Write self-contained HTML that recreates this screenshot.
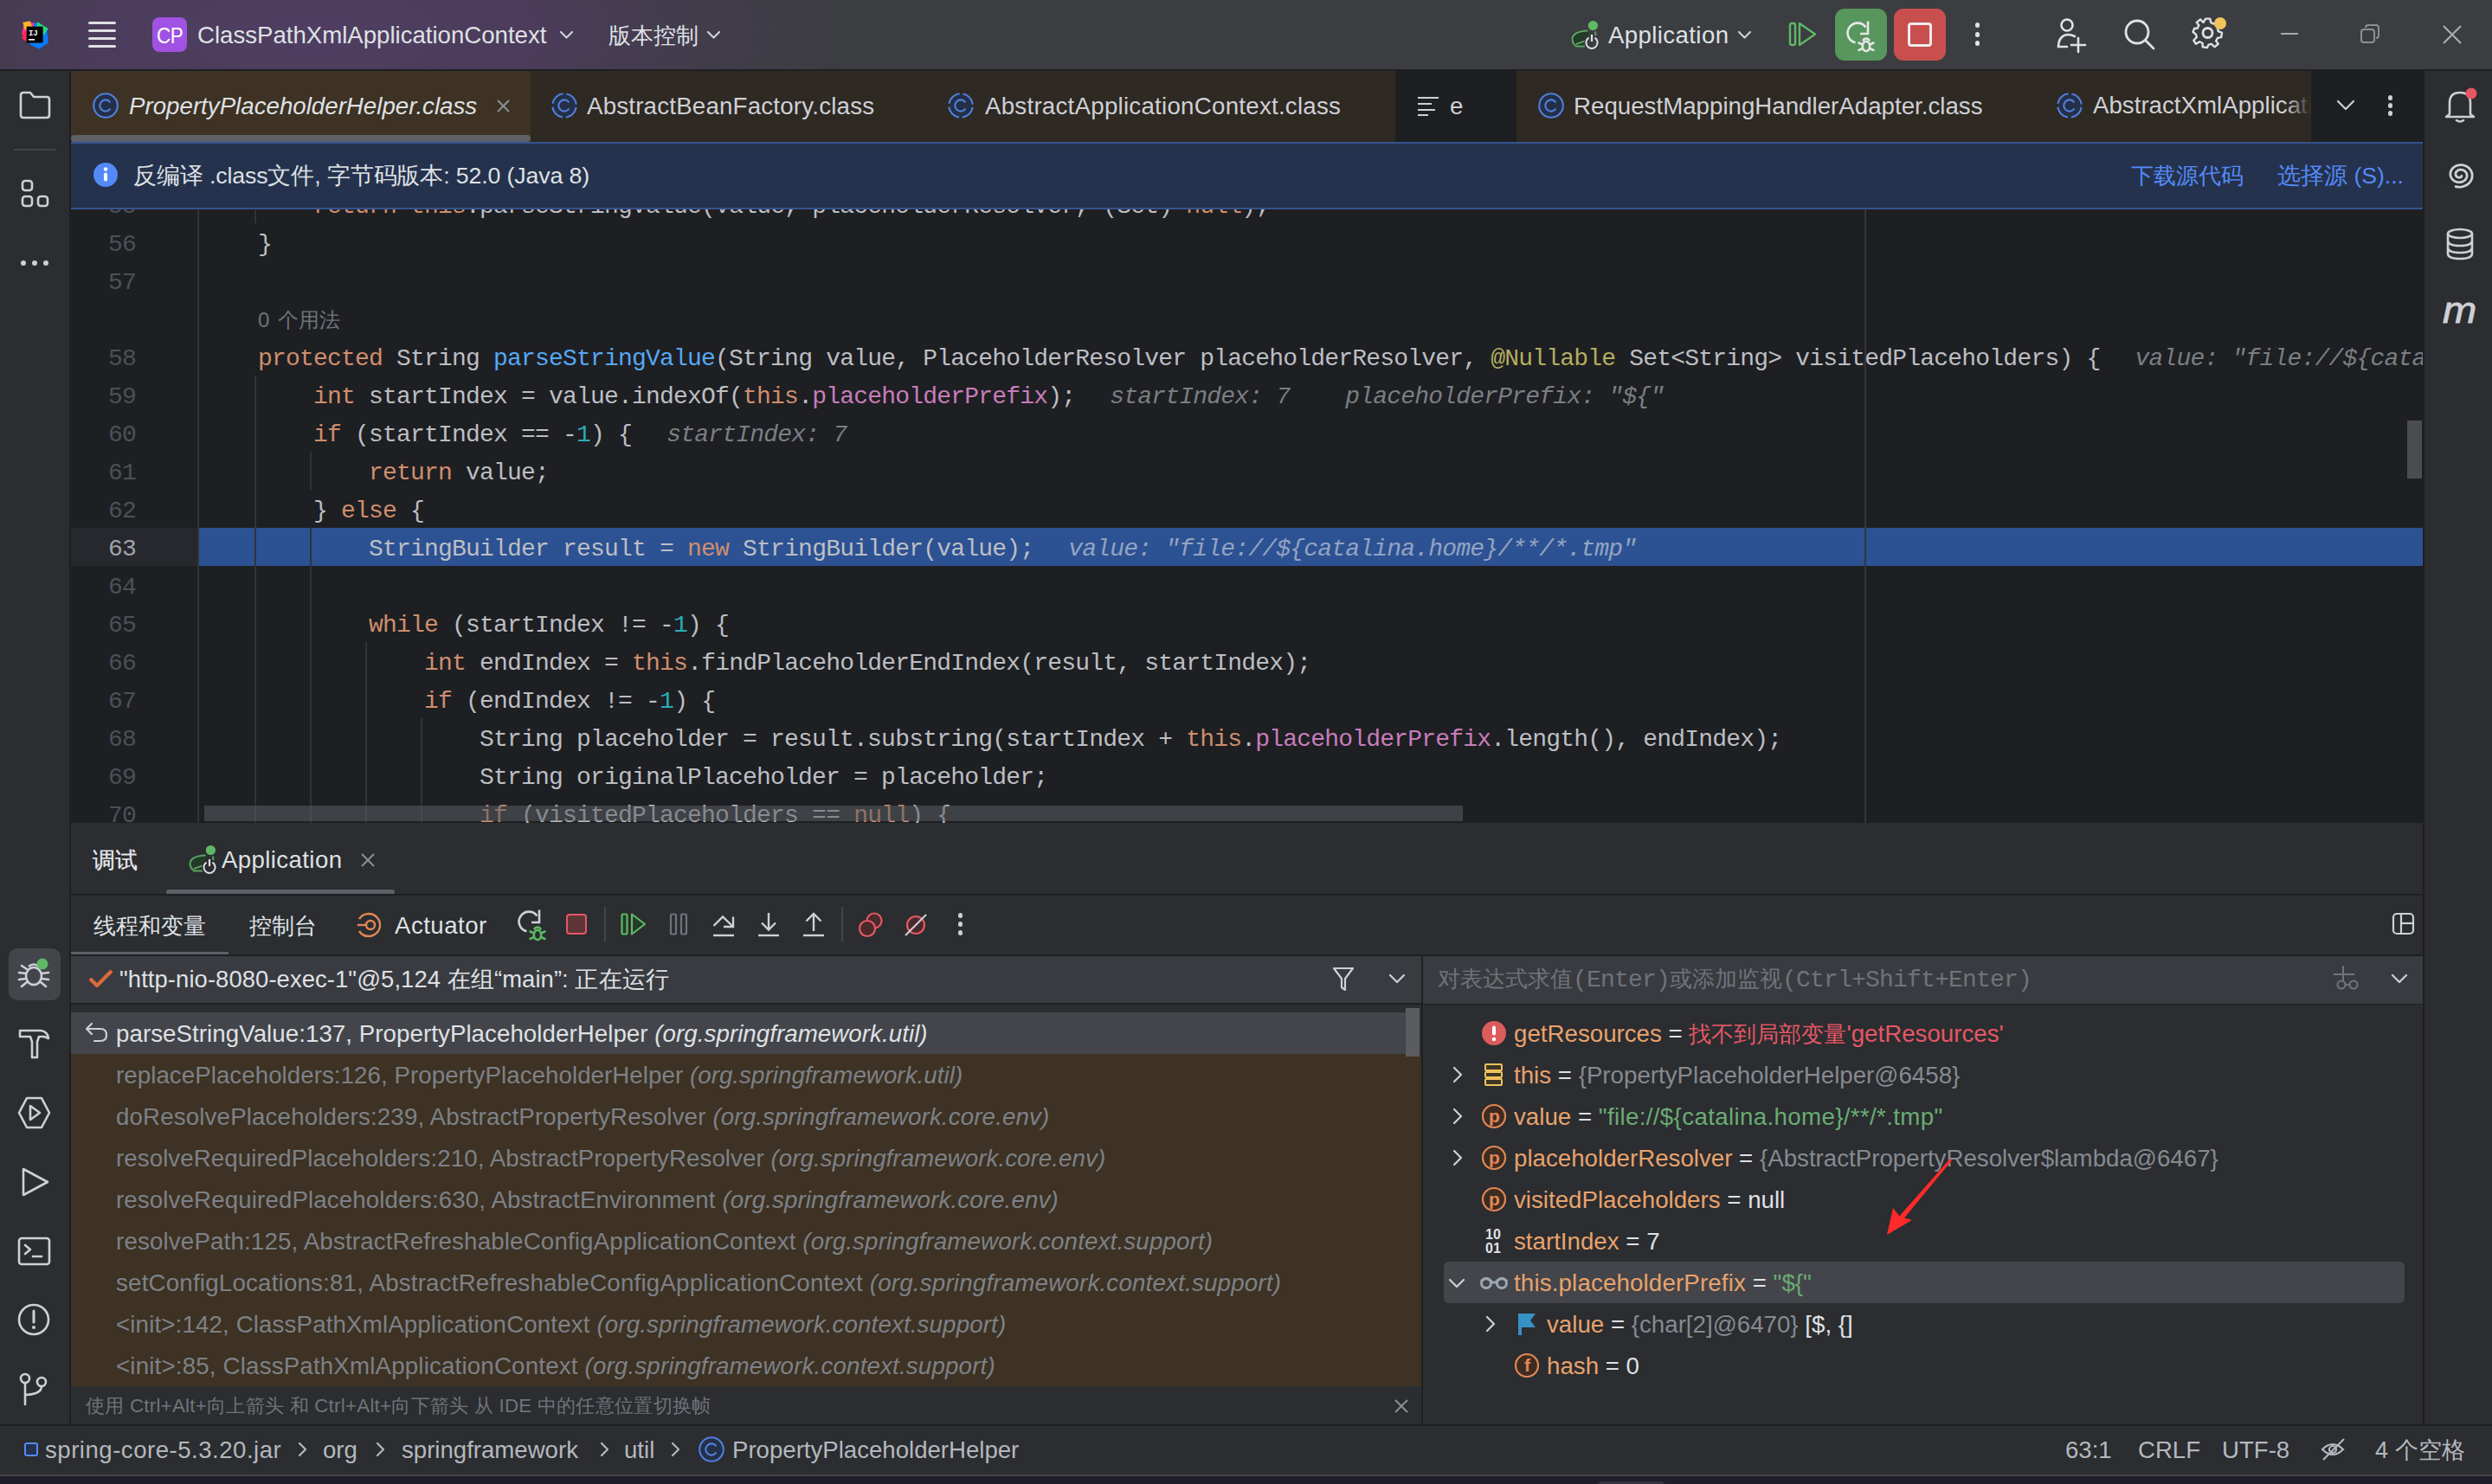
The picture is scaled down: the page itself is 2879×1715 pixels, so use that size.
<!DOCTYPE html><html><head><meta charset="utf-8"><style>
html,body{margin:0;padding:0;width:2879px;height:1715px;overflow:hidden;background:#2b2d30;}
body{position:relative;font-family:"Liberation Sans",sans-serif;}
.code span{white-space:pre}
</style></head><body>
<div style="position:absolute;left:0;top:0;width:2879px;height:80px;background:radial-gradient(ellipse 620px 230px at 360px 40px,#4f3e61 0%,#4b3c5b 40%,#423c4b 72%,#3b3d41 100%);"></div>
<div style="position:absolute;left:0px;top:80px;width:2879px;height:2px;background:#1e1f22;"></div>
<svg style="position:absolute;left:22px;top:21px;" width="38" height="38" viewBox="0 0 38 38"><g transform="translate(1.5,1.5) scale(0.9)">
<polygon points="4,8 14,3 22,8 20,20 6,26 2,18" fill="#ff318c"/>
<polygon points="3,4 12,2 16,10 6,14" fill="#ffb32c"/>
<polygon points="4,16 14,14 10,30 2,24" fill="#fe2857"/>
<polygon points="18,3 34,12 36,30 24,38 12,32 16,14" fill="#087cfa"/>
<polygon points="22,3 36,12 30,20 20,12" fill="#21d789"/>
<rect x="8" y="9" width="21" height="21" fill="#000"/>
<text x="10.5" y="20" font-family="Liberation Mono" font-weight="bold" font-size="10" fill="#fff">IJ</text>
<rect x="10.5" y="25" width="8" height="1.8" fill="#fff"/></g>
</svg>
<div style="position:absolute;left:102px;top:24.9px;width:32px;height:3.2px;border-radius:2px;background:#dfe1e5"></div>
<div style="position:absolute;left:102px;top:33.9px;width:32px;height:3.2px;border-radius:2px;background:#dfe1e5"></div>
<div style="position:absolute;left:102px;top:42.9px;width:32px;height:3.2px;border-radius:2px;background:#dfe1e5"></div>
<div style="position:absolute;left:102px;top:51.9px;width:32px;height:3.2px;border-radius:2px;background:#dfe1e5"></div>
<div style="position:absolute;left:176px;top:20px;width:40px;height:40px;border-radius:8px;background:#a052e2"></div>
<div style="position:absolute;left:181px;top:18.8px;height:44px;line-height:44px;white-space:pre;font-family:'Liberation Sans', sans-serif;font-size:25px;color:#ffffff;letter-spacing:-0.6px;transform:scaleX(0.9);transform-origin:0 50%">CP</div>
<div style="position:absolute;left:228px;top:18.8px;height:44px;line-height:44px;white-space:pre;font-family:'Liberation Sans', sans-serif;font-size:27.6px;color:#dfe1e5;">ClassPathXmlApplicationContext</div>
<svg style="position:absolute;left:645px;top:33px;" width="20" height="14" viewBox="0 0 20 14"><polyline points="3,4 9.5,10.5 16,4" fill="none" stroke="#ced0d6" stroke-width="2.2" stroke-linecap="round" stroke-linejoin="round"/></svg>
<div style="position:absolute;left:703px;top:18.8px;height:44px;line-height:44px;white-space:pre;font-family:'Liberation Sans', sans-serif;font-size:25.5px;color:#dfe1e5;">版本控制</div>
<svg style="position:absolute;left:815px;top:33px;" width="20" height="14" viewBox="0 0 20 14"><polyline points="3,4 9.5,10.5 16,4" fill="none" stroke="#ced0d6" stroke-width="2.2" stroke-linecap="round" stroke-linejoin="round"/></svg>
<svg style="position:absolute;left:1805px;top:15px;" width="50" height="50" viewBox="0 0 50 50">
<path d="M29.5,20.5 C20,21 12,23 11.5,30 C11.5,34 14,37 16,38.5 L26,38.5 L26,32.5 C28,30 30,25 31,22 Z" fill="#233a27"/>
<path d="M29.5,20.5 C20,21 12,23 11.5,30 C11.5,34 14,37 16,38.5 L26,38.5 M16,36 C19,34.5 23,33.5 26,32.5" fill="none" stroke="#5aa463" stroke-width="2"/>
<path d="M38,21.5 L38.5,26" stroke="#5aa463" stroke-width="2"/>
<circle cx="35.4" cy="14.5" r="5.6" fill="#5fb865"/>
<circle cx="34" cy="34.5" r="9" fill="#3b3d41"/>
<path d="M30.5,28.7 A6.6,6.6 0 1 0 37.5,28.7" fill="none" stroke="#dfe1e5" stroke-width="2"/>
<line x1="34" y1="25" x2="34" y2="33" stroke="#dfe1e5" stroke-width="2.2"/>
</svg>
<div style="position:absolute;left:1858px;top:18.8px;height:44px;line-height:44px;white-space:pre;font-family:'Liberation Sans', sans-serif;font-size:27.6px;color:#dfe1e5;letter-spacing:0.4px">Application</div>
<svg style="position:absolute;left:2006px;top:33px;" width="20" height="14" viewBox="0 0 20 14"><polyline points="3,4 9.5,10.5 16,4" fill="none" stroke="#ced0d6" stroke-width="2.2" stroke-linecap="round" stroke-linejoin="round"/></svg>
<svg style="position:absolute;left:2064px;top:24px;" width="36" height="32" viewBox="0 0 36 32">
<rect x="4" y="3" width="6" height="25" rx="2" fill="none" stroke="#5fb865" stroke-width="2.4"/>
<path d="M15,3 L33,15.5 L15,28 Z" fill="none" stroke="#5fb865" stroke-width="2.4" stroke-linejoin="round"/>
</svg>
<div style="position:absolute;left:2120px;top:10px;width:60px;height:60px;border-radius:11px;background:#57965c"></div>
<svg style="position:absolute;left:2115px;top:5px;" width="60" height="60" viewBox="0 0 60 60">
<path d="M28.5,44.3 A11.5,11.5 0 1 1 40.5,26.5" fill="none" stroke="#e6e6e8" stroke-width="2.6"/>
<path d="M43,19.5 L43,34 L34,34" fill="none" stroke="#e6e6e8" stroke-width="2.6"/>
<ellipse cx="41" cy="48.5" rx="4.2" ry="5.6" fill="none" stroke="#e6e6e8" stroke-width="2.6"/>
<path d="M37.3,42.5 A3.8,3.8 0 0 1 44.7,42.5" fill="none" stroke="#e6e6e8" stroke-width="2.6"/>
<path d="M32.5,44.5 L37,46.5 M32.5,53 L37,51 M49.5,44.5 L45,46.5 M49.5,53 L45,51" stroke="#e6e6e8" stroke-width="2.6" stroke-linecap="round"/>
</svg>
<div style="position:absolute;left:2188px;top:10px;width:60px;height:60px;border-radius:11px;background:#c94f4f"></div>
<div style="position:absolute;left:2204px;top:26px;width:22px;height:22px;border:3px solid #ececec;border-radius:4px"></div>
<div style="position:absolute;left:2282px;top:26.4px;width:5.2px;height:5.2px;border-radius:3px;background:#dfe1e5"></div>
<div style="position:absolute;left:2282px;top:37.4px;width:5.2px;height:5.2px;border-radius:3px;background:#dfe1e5"></div>
<div style="position:absolute;left:2282px;top:47.4px;width:5.2px;height:5.2px;border-radius:3px;background:#dfe1e5"></div>
<svg style="position:absolute;left:2374px;top:20px;" width="42" height="42" viewBox="0 0 42 42">
<circle cx="14" cy="9" r="6.5" fill="none" stroke="#dfe1e5" stroke-width="2.6"/>
<path d="M4,34 C4,24 10,20 15,20 C18,20 21,21 23,22" fill="none" stroke="#dfe1e5" stroke-width="2.6" stroke-linecap="round"/>
<line x1="4" y1="34" x2="14" y2="34" stroke="#dfe1e5" stroke-width="2.6" stroke-linecap="round"/>
<line x1="27" y1="24" x2="27" y2="40" stroke="#dfe1e5" stroke-width="2.6" stroke-linecap="round"/>
<line x1="19" y1="32" x2="35" y2="32" stroke="#dfe1e5" stroke-width="2.6" stroke-linecap="round"/>
</svg>
<svg style="position:absolute;left:2453px;top:21px;" width="42" height="40" viewBox="0 0 42 40">
<circle cx="16" cy="16" r="13" fill="none" stroke="#dfe1e5" stroke-width="2.8"/>
<line x1="26" y1="26" x2="35" y2="35" stroke="#dfe1e5" stroke-width="2.8" stroke-linecap="round"/>
</svg>
<svg style="position:absolute;left:2532px;top:20px;" width="42" height="42" viewBox="0 0 42 42">
<path d="M17,3 L23,3 L24,8 L28,10 L33,7 L37,12 L33,16 L34,20 L39,22 L38,28 L33,29 L31,33 L34,37 L29,41 L25,37 L21,38 L19,42 L13,41 L13,36 L9,34 L4,37 L1,32 L5,28 L4,24 L0,21 L2,16 L6,16 L8,12 L5,8 L10,4 L14,8 Z" transform="translate(1.5,-1) scale(0.86)" fill="none" stroke="#dfe1e5" stroke-width="2.8" stroke-linejoin="round"/>
<circle cx="18.5" cy="18" r="5.5" fill="none" stroke="#dfe1e5" stroke-width="2.8"/>
</svg>
<div style="position:absolute;left:2558px;top:20px;width:14px;height:14px;border-radius:7px;background:#f2c55c"></div>
<div style="position:absolute;left:2635px;top:38px;width:20px;height:2px;background:#a8abb0"></div>
<svg style="position:absolute;left:2726px;top:27px;" width="26" height="26" viewBox="0 0 26 26">
<rect x="2" y="7" width="15" height="15" rx="3" fill="none" stroke="#8c8f94" stroke-width="2"/>
<path d="M7,5 Q7,2 10,2 L19,2 Q22,2 22,5 L22,14 Q22,17 19,17" fill="none" stroke="#8c8f94" stroke-width="2"/>
</svg>
<svg style="position:absolute;left:2820px;top:27px;" width="26" height="26" viewBox="0 0 26 26">
<path d="M3,3 L23,23 M23,3 L3,23" stroke="#a8abb0" stroke-width="2.2"/>
</svg>
<div style="position:absolute;left:0px;top:82px;width:80px;height:1622px;background:#2b2d30;"></div>
<div style="position:absolute;left:80px;top:82px;width:2px;height:1564px;background:#1e1f22;"></div>
<div style="position:absolute;left:2801px;top:82px;width:78px;height:1622px;background:#2b2d30;"></div>
<div style="position:absolute;left:2799px;top:82px;width:2px;height:1564px;background:#1e1f22;"></div>
<div style="position:absolute;left:82px;top:82px;width:2717px;height:82px;background:#2e2922;"></div>
<div style="position:absolute;left:82px;top:82px;width:531px;height:82px;background:#3d3223;"></div>
<div style="position:absolute;left:1612px;top:82px;width:140px;height:82px;background:#1e1f22;"></div>
<div style="position:absolute;left:2670px;top:82px;width:129px;height:82px;background:#1e1f22;"></div>
<div style="position:absolute;left:82px;top:156px;width:531px;height:8px;border-radius:4px;background:#5d6066"></div>
<div style="position:absolute;left:82px;top:164px;width:2717px;height:78px;background:#25324d;"></div>
<div style="position:absolute;left:82px;top:164px;width:2717px;height:2px;background:#35538f;"></div>
<div style="position:absolute;left:82px;top:240px;width:2717px;height:2px;background:#35538f;"></div>
<div style="position:absolute;left:82px;top:242px;width:2717px;height:709px;background:#1e1f22;"></div>
<svg style="position:absolute;left:106px;top:106px;" width="32" height="32" viewBox="0 0 32 32">
<circle cx="16" cy="16" r="13.8" fill="#252f48" stroke="#4f80dc" stroke-width="2.1" />
<path d="M21,11.8 A6.6,6.6 0 1 0 21,20.2" fill="none" stroke="#4f80dc" stroke-width="2.1" stroke-linecap="round"/>
</svg>
<div style="position:absolute;left:149px;top:100.8px;height:44px;line-height:44px;white-space:pre;font-family:'Liberation Sans', sans-serif;font-size:27.7px;color:#dfe1e5;font-style:italic">PropertyPlaceholderHelper.class</div>
<svg style="position:absolute;left:573px;top:114px;" width="17" height="17" viewBox="0 0 17 17"><path d="M2,2 L15,15 M15,2 L2,15" stroke="#8c8f94" stroke-width="2"/></svg>
<svg style="position:absolute;left:636px;top:106px;" width="32" height="32" viewBox="0 0 32 32">
<circle cx="16" cy="16" r="13.8" fill="#252f48" stroke="#4f80dc" stroke-width="2.1" stroke-dasharray="17.7 4" stroke-dashoffset="19.7"/>
<path d="M21,11.8 A6.6,6.6 0 1 0 21,20.2" fill="none" stroke="#4f80dc" stroke-width="2.1" stroke-linecap="round"/>
</svg>
<div style="position:absolute;left:678px;top:100.8px;height:44px;line-height:44px;white-space:pre;font-family:'Liberation Sans', sans-serif;font-size:27.7px;color:#ced0d6;letter-spacing:0.2px">AbstractBeanFactory.class</div>
<svg style="position:absolute;left:1094px;top:106px;" width="32" height="32" viewBox="0 0 32 32">
<circle cx="16" cy="16" r="13.8" fill="#252f48" stroke="#4f80dc" stroke-width="2.1" stroke-dasharray="17.7 4" stroke-dashoffset="19.7"/>
<path d="M21,11.8 A6.6,6.6 0 1 0 21,20.2" fill="none" stroke="#4f80dc" stroke-width="2.1" stroke-linecap="round"/>
</svg>
<div style="position:absolute;left:1138px;top:100.8px;height:44px;line-height:44px;white-space:pre;font-family:'Liberation Sans', sans-serif;font-size:27.7px;color:#ced0d6;letter-spacing:0.25px">AbstractApplicationContext.class</div>
<svg style="position:absolute;left:1636px;top:110px;" width="30" height="26" viewBox="0 0 30 26">
<path d="M2,3 L26,3 M2,10 L18,10 M2,17 L22,17 M2,23 L14,23" stroke="#ced0d6" stroke-width="2.2"/>
</svg>
<div style="position:absolute;left:1675px;top:100.8px;height:44px;line-height:44px;white-space:pre;font-family:'Liberation Sans', sans-serif;font-size:27.7px;color:#ced0d6;">e</div>
<svg style="position:absolute;left:1776px;top:106px;" width="32" height="32" viewBox="0 0 32 32">
<circle cx="16" cy="16" r="13.8" fill="#252f48" stroke="#4f80dc" stroke-width="2.1" />
<path d="M21,11.8 A6.6,6.6 0 1 0 21,20.2" fill="none" stroke="#4f80dc" stroke-width="2.1" stroke-linecap="round"/>
</svg>
<div style="position:absolute;left:1818px;top:100.8px;height:44px;line-height:44px;white-space:pre;font-family:'Liberation Sans', sans-serif;font-size:27.7px;color:#ced0d6;">RequestMappingHandlerAdapter.class</div>
<svg style="position:absolute;left:2375px;top:106px;" width="32" height="32" viewBox="0 0 32 32">
<circle cx="16" cy="16" r="13.8" fill="#252f48" stroke="#4f80dc" stroke-width="2.1" stroke-dasharray="17.7 4" stroke-dashoffset="19.7"/>
<path d="M21,11.8 A6.6,6.6 0 1 0 21,20.2" fill="none" stroke="#4f80dc" stroke-width="2.1" stroke-linecap="round"/>
</svg>
<div style="position:absolute;left:2418px;top:100px;width:252px;height:44px;overflow:hidden;">
<div style="position:absolute;left:0;top:0;height:44px;line-height:44px;white-space:pre;font-family:'Liberation Sans', sans-serif;font-size:27.7px;color:#ced0d6">AbstractXmlApplicationContext.class</div>
<div style="position:absolute;right:0;top:0;width:30px;height:44px;background:linear-gradient(90deg,rgba(46,41,34,0),#2e2922)"></div>
</div>
<svg style="position:absolute;left:2698px;top:113px;" width="24" height="18" viewBox="0 0 24 18"><polyline points="3,4 12,13 21,4" fill="none" stroke="#ced0d6" stroke-width="2.2" stroke-linecap="round" stroke-linejoin="round"/></svg>
<div style="position:absolute;left:2759px;top:110.4px;width:5.2px;height:5.2px;border-radius:3px;background:#ced0d6"></div>
<div style="position:absolute;left:2759px;top:119.4px;width:5.2px;height:5.2px;border-radius:3px;background:#ced0d6"></div>
<div style="position:absolute;left:2759px;top:128.4px;width:5.2px;height:5.2px;border-radius:3px;background:#ced0d6"></div>
<svg style="position:absolute;left:106px;top:186px;" width="32" height="32" viewBox="0 0 32 32">
<circle cx="16" cy="16" r="14" fill="#548af7"/>
<circle cx="16" cy="9.5" r="2.2" fill="#fff"/>
<rect x="14" y="13.5" width="4" height="10" rx="2" fill="#fff"/>
</svg>
<div style="position:absolute;left:154px;top:180.8px;height:44px;line-height:44px;white-space:pre;font-family:'Liberation Sans', sans-serif;font-size:26.7px;color:#dfe1e5;letter-spacing:-0.12px">反编译 .class文件, 字节码版本: 52.0 (Java 8)</div>
<div style="position:absolute;left:2462px;top:180.8px;height:44px;line-height:44px;white-space:pre;font-family:'Liberation Sans', sans-serif;font-size:25.5px;color:#548af7;">下载源代码</div>
<div style="position:absolute;left:2631px;top:180.8px;height:44px;line-height:44px;white-space:pre;font-family:'Liberation Sans', sans-serif;font-size:26.6px;color:#548af7;">选择源 (S)...</div>
<svg style="position:absolute;left:21px;top:104px;" width="40" height="36" viewBox="0 0 40 36">
<path d="M3,6 Q3,3 6,3 L14,3 L18,8 L33,8 Q36,8 36,11 L36,29 Q36,32 33,32 L6,32 Q3,32 3,29 Z" fill="none" stroke="#ced0d6" stroke-width="2.6" stroke-linejoin="round"/>
</svg>
<div style="position:absolute;left:16px;top:172px;width:48px;height:2px;background:#43454a;"></div>
<svg style="position:absolute;left:21.5px;top:205px;" width="40" height="40" viewBox="0 0 40 40">
<rect x="4" y="4" width="11" height="11" rx="3" fill="none" stroke="#ced0d6" stroke-width="2.6"/>
<rect x="4" y="22" width="11" height="11" rx="3" fill="none" stroke="#ced0d6" stroke-width="2.6"/>
<rect x="22" y="22" width="11" height="11" rx="3" fill="none" stroke="#ced0d6" stroke-width="2.6"/>
</svg>
<div style="position:absolute;left:24px;top:301px;width:6px;height:6px;border-radius:3px;background:#ced0d6"></div>
<div style="position:absolute;left:37px;top:301px;width:6px;height:6px;border-radius:3px;background:#ced0d6"></div>
<div style="position:absolute;left:50px;top:301px;width:6px;height:6px;border-radius:3px;background:#ced0d6"></div>
<div style="position:absolute;left:10px;top:1096px;width:60px;height:60px;border-radius:10px;background:#43454a"></div>
<svg style="position:absolute;left:19px;top:1104px;" width="44" height="44" viewBox="0 0 44 44">
<ellipse cx="20" cy="24" rx="9" ry="10" fill="none" stroke="#ced0d6" stroke-width="2.6"/>
<path d="M14,13 Q20,8 26,13" fill="none" stroke="#ced0d6" stroke-width="2.6"/>
<path d="M3,20 L11,21 M3,28 L11,27 M37,20 L29,21 M37,28 L29,27 M6,36 L12,31 M34,36 L28,31 M6,12 L12,16 " stroke="#ced0d6" stroke-width="2.6" stroke-linecap="round"/>
<circle cx="30" cy="10" r="6.5" fill="#5fb865"/>
</svg>
<svg style="position:absolute;left:19px;top:1186px;" width="42" height="42" viewBox="0 0 42 42">
<path d="M4,5 L28,5 Q36,6 37,14 L32,12 L26,12 L24,18 L24,36 L18,36 L18,18 L16,12 L4,12 Z" fill="none" stroke="#ced0d6" stroke-width="2.6" stroke-linejoin="round"/>
</svg>
<svg style="position:absolute;left:19px;top:1266px;" width="42" height="42" viewBox="0 0 42 42">
<path d="M12,3 L29,3 L38,20 L29,37 L12,37 L3,20 Z" fill="none" stroke="#ced0d6" stroke-width="2.6" stroke-linejoin="round"/>
<path d="M16,12 L27,20 L16,28 Z" fill="none" stroke="#ced0d6" stroke-width="2.6" stroke-linejoin="round"/>
</svg>
<svg style="position:absolute;left:22px;top:1346px;" width="40" height="42" viewBox="0 0 40 42">
<path d="M5,5 L33,20 L5,35 Z" fill="none" stroke="#ced0d6" stroke-width="2.6" stroke-linejoin="round"/>
</svg>
<svg style="position:absolute;left:19px;top:1428px;" width="42" height="36" viewBox="0 0 42 36">
<rect x="3" y="3" width="35" height="30" rx="3" fill="none" stroke="#ced0d6" stroke-width="2.6"/>
<polyline points="10,11 16,16 10,21" fill="none" stroke="#ced0d6" stroke-width="2.6" stroke-linecap="round" stroke-linejoin="round"/>
<line x1="19" y1="24" x2="29" y2="24" stroke="#ced0d6" stroke-width="2.6" stroke-linecap="round"/>
</svg>
<svg style="position:absolute;left:19px;top:1505px;" width="42" height="42" viewBox="0 0 42 42">
<circle cx="20" cy="20" r="17" fill="none" stroke="#ced0d6" stroke-width="2.6"/>
<line x1="20" y1="10" x2="20" y2="23" stroke="#ced0d6" stroke-width="3" stroke-linecap="round"/>
<circle cx="20" cy="29" r="2" fill="#ced0d6"/>
</svg>
<svg style="position:absolute;left:19px;top:1585px;" width="42" height="42" viewBox="0 0 42 42">
<circle cx="10" cy="8" r="5" fill="none" stroke="#ced0d6" stroke-width="2.6"/>
<circle cx="29" cy="12" r="5" fill="none" stroke="#ced0d6" stroke-width="2.6"/>
<path d="M10,13 L10,38 M29,17 Q29,26 11,27" fill="none" stroke="#ced0d6" stroke-width="2.6" stroke-linecap="round"/>
</svg>
<svg style="position:absolute;left:2822px;top:100px;" width="44" height="44" viewBox="0 0 44 44">
<path d="M8,32 L8,19 Q8,7 20,7 Q32,7 32,19 L32,32 L36,35 L4,35 Z" fill="none" stroke="#ced0d6" stroke-width="2.6" stroke-linejoin="round"/>
<path d="M16,39 Q20,42 24,39" fill="none" stroke="#ced0d6" stroke-width="2.6" stroke-linecap="round"/>
<circle cx="33" cy="8" r="6.5" fill="#e55765"/>
</svg>
<svg style="position:absolute;left:2820px;top:182px;" width="44" height="40" viewBox="0 0 44 40">
<path d="M24.0,21.3 L23.9,21.6 L23.8,21.9 L23.6,22.1 L23.4,22.4 L23.1,22.6 L22.8,22.8 L22.4,22.9 L22.1,23.1 L21.7,23.1 L21.2,23.2 L20.8,23.2 L20.4,23.1 L19.9,23.0 L19.5,22.9 L19.0,22.7 L18.6,22.4 L18.2,22.1 L17.9,21.7 L17.6,21.3 L17.4,20.9 L17.2,20.4 L17.0,19.9 L17.0,19.4 L17.0,18.8 L17.0,18.3 L17.2,17.7 L17.4,17.2 L17.7,16.7 L18.1,16.2 L18.5,15.7 L19.1,15.3 L19.6,14.9 L20.3,14.6 L20.9,14.4 L21.7,14.2 L22.4,14.1 L23.2,14.1 L24.0,14.2 L24.7,14.3 L25.5,14.5 L26.2,14.9 L26.9,15.3 L27.6,15.7 L28.2,16.3 L28.7,16.9 L29.2,17.6 L29.6,18.3 L29.8,19.1 L30.0,19.9 L30.1,20.8 L30.0,21.6 L29.9,22.5 L29.6,23.3 L29.2,24.1 L28.8,24.9 L28.2,25.7 L27.5,26.3 L26.7,26.9 L25.8,27.5 L24.9,27.9 L23.9,28.3 L22.8,28.5 L21.7,28.6 L20.6,28.6 L19.5,28.5 L18.3,28.3 L17.3,28.0 L16.2,27.5 L15.2,26.9 L14.3,26.2 L13.5,25.5 L12.7,24.6 L12.1,23.6 L11.6,22.6 L11.2,21.5 L11.0,20.4 L10.9,19.3 L10.9,18.1 L11.1,16.9 L11.5,15.8 L12.0,14.7 L12.7,13.6 L13.5,12.6 L14.4,11.7 L15.4,10.9 L16.6,10.2 L17.8,9.6 L19.2,9.1 L20.6,8.8 L22.0,8.6 L23.5,8.6 L24.9,8.7 L26.4,9.0 L27.8,9.5 L29.2,10.0 L30.5,10.8 L31.7,11.6 L32.8,12.6 L33.7,13.8 L34.6,15.0 L35.2,16.3 L35.7,17.6 L36.0,19.1 L36.2,20.5 L36.1,22.0 L35.9,23.5 L35.5,24.9 L34.8,26.4 L34.0,27.7 L33.1,29.0 L31.9,30.1 L30.6,31.2 L29.2,32.1 L27.6,32.8 L26.0,33.4 L24.3,33.8 L22.5,34.1 L20.7,34.1 L18.9,34.0 L17.1,33.7" fill="none" stroke="#ced0d6" stroke-width="2.8" stroke-linecap="round" stroke-linejoin="round"/>
</svg>
<svg style="position:absolute;left:2823px;top:263px;" width="40" height="42" viewBox="0 0 40 42">
<ellipse cx="19" cy="7" rx="14" ry="5" fill="none" stroke="#ced0d6" stroke-width="2.6"/>
<path d="M5,7 L5,30 Q5,36 19,36 Q33,36 33,30 L33,7 M5,15 Q5,21 19,21 Q33,21 33,15 M5,23 Q5,29 19,29 Q33,29 33,23" fill="none" stroke="#ced0d6" stroke-width="2.6"/>
</svg>
<div style="position:absolute;left:2822px;top:336.8px;height:44px;line-height:44px;white-space:pre;font-family:'Liberation Sans', sans-serif;font-size:42px;color:#ced0d6;font-style:italic;transform:scaleX(1.12);transform-origin:0 50%;-webkit-text-stroke:0.8px #ced0d6">m</div>
<div style="position:absolute;left:82px;top:242px;width:2717px;height:709px;overflow:hidden;">
<div style="position:absolute;left:-82px;top:-242px;width:2879px;height:1715px;">
<div style="position:absolute;left:82px;top:610px;width:146px;height:44px;background:#26282e;"></div>
<div style="position:absolute;left:230px;top:610px;width:2569px;height:44px;background:#2c5293;"></div>
<div style="position:absolute;left:228px;top:242px;width:2px;height:709px;background:#313338;"></div>
<div style="position:absolute;left:2154px;top:242px;width:2px;height:709px;background:#34363b;"></div>
<div style="position:absolute;left:294px;top:242px;width:2px;height:16px;background:#313338;"></div>
<div style="position:absolute;left:294px;top:434px;width:2px;height:528px;background:#313338;"></div>
<div style="position:absolute;left:358px;top:522px;width:2px;height:44px;background:#313338;"></div>
<div style="position:absolute;left:358px;top:610px;width:2px;height:352px;background:#313338;"></div>
<div style="position:absolute;left:422px;top:742px;width:2px;height:220px;background:#313338;"></div>
<div style="position:absolute;left:486px;top:830px;width:2px;height:132px;background:#313338;"></div>
<div style="position:absolute;left:60px;width:97px;text-align:right;top:216.5px;height:44px;line-height:44px;font-family:'Liberation Mono', monospace;font-size:28px;letter-spacing:-0.8px;color:#4b5059">55</div>
<div style="position:absolute;left:60px;width:97px;text-align:right;top:260.5px;height:44px;line-height:44px;font-family:'Liberation Mono', monospace;font-size:28px;letter-spacing:-0.8px;color:#4b5059">56</div>
<div style="position:absolute;left:60px;width:97px;text-align:right;top:304.5px;height:44px;line-height:44px;font-family:'Liberation Mono', monospace;font-size:28px;letter-spacing:-0.8px;color:#4b5059">57</div>
<div style="position:absolute;left:60px;width:97px;text-align:right;top:392.5px;height:44px;line-height:44px;font-family:'Liberation Mono', monospace;font-size:28px;letter-spacing:-0.8px;color:#4b5059">58</div>
<div style="position:absolute;left:60px;width:97px;text-align:right;top:436.5px;height:44px;line-height:44px;font-family:'Liberation Mono', monospace;font-size:28px;letter-spacing:-0.8px;color:#4b5059">59</div>
<div style="position:absolute;left:60px;width:97px;text-align:right;top:480.5px;height:44px;line-height:44px;font-family:'Liberation Mono', monospace;font-size:28px;letter-spacing:-0.8px;color:#4b5059">60</div>
<div style="position:absolute;left:60px;width:97px;text-align:right;top:524.5px;height:44px;line-height:44px;font-family:'Liberation Mono', monospace;font-size:28px;letter-spacing:-0.8px;color:#4b5059">61</div>
<div style="position:absolute;left:60px;width:97px;text-align:right;top:568.5px;height:44px;line-height:44px;font-family:'Liberation Mono', monospace;font-size:28px;letter-spacing:-0.8px;color:#4b5059">62</div>
<div style="position:absolute;left:60px;width:97px;text-align:right;top:612.5px;height:44px;line-height:44px;font-family:'Liberation Mono', monospace;font-size:28px;letter-spacing:-0.8px;color:#a1a3ab">63</div>
<div style="position:absolute;left:60px;width:97px;text-align:right;top:656.5px;height:44px;line-height:44px;font-family:'Liberation Mono', monospace;font-size:28px;letter-spacing:-0.8px;color:#4b5059">64</div>
<div style="position:absolute;left:60px;width:97px;text-align:right;top:700.5px;height:44px;line-height:44px;font-family:'Liberation Mono', monospace;font-size:28px;letter-spacing:-0.8px;color:#4b5059">65</div>
<div style="position:absolute;left:60px;width:97px;text-align:right;top:744.5px;height:44px;line-height:44px;font-family:'Liberation Mono', monospace;font-size:28px;letter-spacing:-0.8px;color:#4b5059">66</div>
<div style="position:absolute;left:60px;width:97px;text-align:right;top:788.5px;height:44px;line-height:44px;font-family:'Liberation Mono', monospace;font-size:28px;letter-spacing:-0.8px;color:#4b5059">67</div>
<div style="position:absolute;left:60px;width:97px;text-align:right;top:832.5px;height:44px;line-height:44px;font-family:'Liberation Mono', monospace;font-size:28px;letter-spacing:-0.8px;color:#4b5059">68</div>
<div style="position:absolute;left:60px;width:97px;text-align:right;top:876.5px;height:44px;line-height:44px;font-family:'Liberation Mono', monospace;font-size:28px;letter-spacing:-0.8px;color:#4b5059">69</div>
<div style="position:absolute;left:60px;width:97px;text-align:right;top:920.5px;height:44px;line-height:44px;font-family:'Liberation Mono', monospace;font-size:28px;letter-spacing:-0.8px;color:#4b5059">70</div>
<div class="code" style="position:absolute;left:298px;top:216.5px;height:44px;line-height:44px;white-space:pre;font-family:'Liberation Mono', monospace;font-size:28px;letter-spacing:-0.8px;"><span style="color:#bcbec4;">    </span><span style="color:#cf8e6d;">return</span><span style="color:#bcbec4;"> </span><span style="color:#cf8e6d;">this</span><span style="color:#bcbec4;">.parseStringValue(value, placeholderResolver, (Set) </span><span style="color:#cf8e6d;">null</span><span style="color:#bcbec4;">);</span></div>
<div class="code" style="position:absolute;left:298px;top:260.5px;height:44px;line-height:44px;white-space:pre;font-family:'Liberation Mono', monospace;font-size:28px;letter-spacing:-0.8px;"><span style="color:#bcbec4;">}</span></div>
<div style="position:absolute;left:298px;top:347.5px;height:44px;line-height:44px;white-space:pre;font-family:'Liberation Sans', sans-serif;font-size:24.2px;color:#6f737a;word-spacing:3px;">0 个用法</div>
<div class="code" style="position:absolute;left:298px;top:392.5px;height:44px;line-height:44px;white-space:pre;font-family:'Liberation Mono', monospace;font-size:28px;letter-spacing:-0.8px;"><span style="color:#cf8e6d;">protected</span><span style="color:#bcbec4;"> String </span><span style="color:#56a8f5;">parseStringValue</span><span style="color:#bcbec4;">(String value, PlaceholderResolver placeholderResolver, </span><span style="color:#b3ae60;">@Nullable</span><span style="color:#bcbec4;"> Set&lt;String&gt; visitedPlaceholders) {</span><span style="color:#bcbec4;">  </span><span style="color:#7a7e85;font-style:italic;margin-left:8px;">value: &quot;file://${catalina.home}/**/*.tmp&quot;</span></div>
<div class="code" style="position:absolute;left:298px;top:436.5px;height:44px;line-height:44px;white-space:pre;font-family:'Liberation Mono', monospace;font-size:28px;letter-spacing:-0.8px;"><span style="color:#bcbec4;">    </span><span style="color:#cf8e6d;">int</span><span style="color:#bcbec4;"> startIndex = value.indexOf(</span><span style="color:#cf8e6d;">this</span><span style="color:#bcbec4;">.</span><span style="color:#c77dbb;">placeholderPrefix</span><span style="color:#bcbec4;">);</span><span style="color:#bcbec4;">  </span><span style="color:#7a7e85;font-style:italic;margin-left:8px;">startIndex: 7</span><span style="color:#bcbec4;">    </span><span style="color:#7a7e85;font-style:italic;">placeholderPrefix: &quot;${&quot;</span></div>
<div class="code" style="position:absolute;left:298px;top:480.5px;height:44px;line-height:44px;white-space:pre;font-family:'Liberation Mono', monospace;font-size:28px;letter-spacing:-0.8px;"><span style="color:#bcbec4;">    </span><span style="color:#cf8e6d;">if</span><span style="color:#bcbec4;"> (startIndex == -</span><span style="color:#2aacb8;">1</span><span style="color:#bcbec4;">) {</span><span style="color:#bcbec4;">  </span><span style="color:#7a7e85;font-style:italic;margin-left:8px;">startIndex: 7</span></div>
<div class="code" style="position:absolute;left:298px;top:524.5px;height:44px;line-height:44px;white-space:pre;font-family:'Liberation Mono', monospace;font-size:28px;letter-spacing:-0.8px;"><span style="color:#bcbec4;">        </span><span style="color:#cf8e6d;">return</span><span style="color:#bcbec4;"> value;</span></div>
<div class="code" style="position:absolute;left:298px;top:568.5px;height:44px;line-height:44px;white-space:pre;font-family:'Liberation Mono', monospace;font-size:28px;letter-spacing:-0.8px;"><span style="color:#bcbec4;">    } </span><span style="color:#cf8e6d;">else</span><span style="color:#bcbec4;"> {</span></div>
<div class="code" style="position:absolute;left:298px;top:612.5px;height:44px;line-height:44px;white-space:pre;font-family:'Liberation Mono', monospace;font-size:28px;letter-spacing:-0.8px;"><span style="color:#bcbec4;">        StringBuilder result = </span><span style="color:#cf8e6d;">new</span><span style="color:#bcbec4;"> StringBuilder(value);</span><span style="color:#bcbec4;">  </span><span style="color:#94a3c0;font-style:italic;margin-left:8px;">value: &quot;file://${catalina.home}/**/*.tmp&quot;</span></div>
<div class="code" style="position:absolute;left:298px;top:700.5px;height:44px;line-height:44px;white-space:pre;font-family:'Liberation Mono', monospace;font-size:28px;letter-spacing:-0.8px;"><span style="color:#bcbec4;">        </span><span style="color:#cf8e6d;">while</span><span style="color:#bcbec4;"> (startIndex != -</span><span style="color:#2aacb8;">1</span><span style="color:#bcbec4;">) {</span></div>
<div class="code" style="position:absolute;left:298px;top:744.5px;height:44px;line-height:44px;white-space:pre;font-family:'Liberation Mono', monospace;font-size:28px;letter-spacing:-0.8px;"><span style="color:#bcbec4;">            </span><span style="color:#cf8e6d;">int</span><span style="color:#bcbec4;"> endIndex = </span><span style="color:#cf8e6d;">this</span><span style="color:#bcbec4;">.findPlaceholderEndIndex(result, startIndex);</span></div>
<div class="code" style="position:absolute;left:298px;top:788.5px;height:44px;line-height:44px;white-space:pre;font-family:'Liberation Mono', monospace;font-size:28px;letter-spacing:-0.8px;"><span style="color:#bcbec4;">            </span><span style="color:#cf8e6d;">if</span><span style="color:#bcbec4;"> (endIndex != -</span><span style="color:#2aacb8;">1</span><span style="color:#bcbec4;">) {</span></div>
<div class="code" style="position:absolute;left:298px;top:832.5px;height:44px;line-height:44px;white-space:pre;font-family:'Liberation Mono', monospace;font-size:28px;letter-spacing:-0.8px;"><span style="color:#bcbec4;">                String placeholder = result.substring(startIndex + </span><span style="color:#cf8e6d;">this</span><span style="color:#bcbec4;">.</span><span style="color:#c77dbb;">placeholderPrefix</span><span style="color:#bcbec4;">.length(), endIndex);</span></div>
<div class="code" style="position:absolute;left:298px;top:876.5px;height:44px;line-height:44px;white-space:pre;font-family:'Liberation Mono', monospace;font-size:28px;letter-spacing:-0.8px;"><span style="color:#bcbec4;">                String originalPlaceholder = placeholder;</span></div>
<div class="code" style="position:absolute;left:298px;top:920.5px;height:44px;line-height:44px;white-space:pre;font-family:'Liberation Mono', monospace;font-size:28px;letter-spacing:-0.8px;"><span style="color:#bcbec4;">                </span><span style="color:#cf8e6d;">if</span><span style="color:#bcbec4;"> (visitedPlaceholders == </span><span style="color:#cf8e6d;">null</span><span style="color:#bcbec4;">) {</span></div>
<div style="position:absolute;left:236px;top:931px;width:1454px;height:18px;background:rgba(90,93,99,0.55);"></div>
<div style="position:absolute;left:2781px;top:486px;width:17px;height:67px;background:#4a4c50;"></div>
</div></div>
<div style="position:absolute;left:82px;top:951px;width:2717px;height:695px;background:#2b2d30;"></div>
<div style="position:absolute;left:0px;top:1646px;width:2879px;height:2px;background:#1e1f22;"></div>
<div style="position:absolute;left:0px;top:1648px;width:2879px;height:56px;background:#2b2d30;"></div>
<div style="position:absolute;left:0px;top:1704px;width:2879px;height:2px;background:#45454d;"></div>
<div style="position:absolute;left:0px;top:1706px;width:2879px;height:9px;background:#1f1d2a;"></div>
<div style="position:absolute;left:107px;top:971.8px;height:44px;line-height:44px;white-space:pre;font-family:'Liberation Sans', sans-serif;font-size:25.5px;color:#e6e8ec;-webkit-text-stroke:0.3px #e6e8ec">调试</div>
<svg style="position:absolute;left:208px;top:968px;" width="50" height="50" viewBox="0 0 50 50">
<path d="M29.5,20.5 C20,21 12,23 11.5,30 C11.5,34 14,37 16,38.5 L26,38.5 L26,32.5 C28,30 30,25 31,22 Z" fill="#233a27"/>
<path d="M29.5,20.5 C20,21 12,23 11.5,30 C11.5,34 14,37 16,38.5 L26,38.5 M16,36 C19,34.5 23,33.5 26,32.5" fill="none" stroke="#5aa463" stroke-width="2"/>
<path d="M38,21.5 L38.5,26" stroke="#5aa463" stroke-width="2"/>
<circle cx="35.4" cy="14.5" r="5.6" fill="#5fb865"/>
<circle cx="34" cy="34.5" r="9" fill="#2b2d30"/>
<path d="M30.5,28.7 A6.6,6.6 0 1 0 37.5,28.7" fill="none" stroke="#dfe1e5" stroke-width="2"/>
<line x1="34" y1="25" x2="34" y2="33" stroke="#dfe1e5" stroke-width="2.2"/>
</svg>
<div style="position:absolute;left:256px;top:971.8px;height:44px;line-height:44px;white-space:pre;font-family:'Liberation Sans', sans-serif;font-size:27.6px;color:#dfe1e5;letter-spacing:0.4px">Application</div>
<svg style="position:absolute;left:416px;top:985px;" width="18" height="18" viewBox="0 0 18 18"><path d="M2,2 L16,16 M16,2 L2,16" stroke="#8c8f94" stroke-width="2"/></svg>
<div style="position:absolute;left:192px;top:1028px;width:264px;height:6px;border-radius:3px;background:#5d6066"></div>
<div style="position:absolute;left:82px;top:1033px;width:2717px;height:2px;background:#1e1f22;"></div>
<div style="position:absolute;left:108px;top:1047.8px;height:44px;line-height:44px;white-space:pre;font-family:'Liberation Sans', sans-serif;font-size:25.5px;color:#dfe1e5;">线程和变量</div>
<div style="position:absolute;left:288px;top:1047.8px;height:44px;line-height:44px;white-space:pre;font-family:'Liberation Sans', sans-serif;font-size:25.5px;color:#dfe1e5;">控制台</div>
<svg style="position:absolute;left:410px;top:1052px;" width="36" height="34" viewBox="0 0 36 34">
<path d="M16,4 A13,13 0 1 1 16,30" fill="none" stroke="#e08855" stroke-width="2.4"/>
<path d="M16,4 A13,13 0 0 0 5,10" fill="none" stroke="#e08855" stroke-width="2.4"/>
<path d="M16,30 A13,13 0 0 1 5,24" fill="none" stroke="#e08855" stroke-width="2.4"/>
<circle cx="18" cy="17" r="5" fill="none" stroke="#e08855" stroke-width="2.4"/>
<line x1="3" y1="17" x2="13" y2="17" stroke="#e08855" stroke-width="2.4"/>
</svg>
<div style="position:absolute;left:456px;top:1047.8px;height:44px;line-height:44px;white-space:pre;font-family:'Liberation Sans', sans-serif;font-size:27.6px;color:#dfe1e5;letter-spacing:0.5px">Actuator</div>
<div style="position:absolute;left:82px;top:1100px;width:182px;height:4px;background:#5d6066;"></div>
<svg style="position:absolute;left:580px;top:1032px;" width="60" height="60" viewBox="0 0 60 60">
<path d="M28.5,44.3 A11.5,11.5 0 1 1 40.5,26.5" fill="none" stroke="#ced0d6" stroke-width="2.6"/>
<path d="M43,19.5 L43,34 L34,34" fill="none" stroke="#ced0d6" stroke-width="2.6"/>
<ellipse cx="41" cy="48.5" rx="4.2" ry="5.6" fill="#2b2d30" stroke="#5fb865" stroke-width="2.6"/>
<path d="M37.3,42.5 A3.8,3.8 0 0 1 44.7,42.5" fill="none" stroke="#5fb865" stroke-width="2.6"/>
<path d="M32.5,44.5 L37,46.5 M32.5,53 L37,51 M49.5,44.5 L45,46.5 M49.5,53 L45,51" stroke="#5fb865" stroke-width="2.6" stroke-linecap="round"/>
</svg>
<div style="position:absolute;left:654px;top:1056px;width:20px;height:20px;border:2.4px solid #e55765;border-radius:4px;background:#5e3537"></div>
<div style="position:absolute;left:698px;top:1048px;width:2px;height:40px;background:#43454a;"></div>
<svg style="position:absolute;left:714px;top:1052px;" width="36" height="34" viewBox="0 0 36 34">
<rect x="4.5" y="4.5" width="6" height="23" rx="1.5" fill="#243a27" stroke="#5fb865" stroke-width="2.2"/>
<path d="M16,4.5 L31,16 L16,27.5 Z" fill="#243a27" stroke="#5fb865" stroke-width="2.2" stroke-linejoin="round"/>
</svg>
<svg style="position:absolute;left:770px;top:1052px;" width="30" height="34" viewBox="0 0 30 34">
<rect x="5" y="4.5" width="6" height="23" rx="1.5" fill="none" stroke="#6f737a" stroke-width="2.2"/>
<rect x="17" y="4.5" width="6" height="23" rx="1.5" fill="none" stroke="#6f737a" stroke-width="2.2"/>
</svg>
<svg style="position:absolute;left:815px;top:1050px;" width="150" height="40" viewBox="0 0 150 40">
<g fill="none" stroke="#ced0d6" stroke-width="2.4">
<polyline points="9.5,20 20,9.5 31.5,20.5"/>
<polyline points="32,9.5 32,21 21,21"/>
<line x1="9" y1="31" x2="33" y2="31"/>
<line x1="73" y1="5" x2="73" y2="25"/>
<polyline points="65,16.5 73,24.5 81,16.5"/>
<line x1="61" y1="31" x2="85" y2="31"/>
<line x1="125" y1="6.5" x2="125" y2="26"/>
<polyline points="116.5,14.5 125,6 133.5,14.5"/>
<line x1="113" y1="31" x2="137" y2="31"/>
</g>
</svg>
<div style="position:absolute;left:972px;top:1048px;width:2px;height:40px;background:#43454a;"></div>
<svg style="position:absolute;left:990px;top:1052px;" width="32" height="34" viewBox="0 0 32 34">
<circle cx="20" cy="12" r="8.5" fill="#4a2a2c" stroke="#e55765" stroke-width="2.2"/>
<circle cx="12" cy="21" r="9" fill="#4a2a2c" stroke="#e55765" stroke-width="2.2"/>
</svg>
<svg style="position:absolute;left:1042px;top:1052px;" width="32" height="34" viewBox="0 0 32 34">
<circle cx="16" cy="17" r="10" fill="#4a2a2c" stroke="#e55765" stroke-width="2.2"/>
<line x1="4" y1="29" x2="28" y2="5" stroke="#ced0d6" stroke-width="2.2"/>
</svg>
<div style="position:absolute;left:1107px;top:1055.4px;width:5.2px;height:5.2px;border-radius:3px;background:#ced0d6"></div>
<div style="position:absolute;left:1107px;top:1065.4px;width:5.2px;height:5.2px;border-radius:3px;background:#ced0d6"></div>
<div style="position:absolute;left:1107px;top:1075.4px;width:5.2px;height:5.2px;border-radius:3px;background:#ced0d6"></div>
<svg style="position:absolute;left:2762px;top:1053px;" width="32" height="32" viewBox="0 0 32 32">
<rect x="3" y="3" width="23" height="23" rx="4" fill="none" stroke="#ced0d6" stroke-width="2.2"/>
<line x1="12" y1="3" x2="12" y2="26" stroke="#ced0d6" stroke-width="2.2"/>
<line x1="12" y1="14" x2="26" y2="14" stroke="#ced0d6" stroke-width="2.2"/>
</svg>
<div style="position:absolute;left:82px;top:1103px;width:2717px;height:2px;background:#1e1f22;"></div>
<div style="position:absolute;left:82px;top:1105px;width:1560px;height:55px;background:#393b40;"></div>
<div style="position:absolute;left:1642px;top:1103px;width:2px;height:543px;background:#1e1f22;"></div>
<div style="position:absolute;left:82px;top:1160px;width:1560px;height:10px;background:#2b2d30;"></div>
<div style="position:absolute;left:82px;top:1159px;width:2717px;height:2px;background:#1e1f22;"></div>
<svg style="position:absolute;left:100px;top:1118px;" width="34" height="26" viewBox="0 0 34 26">
<polyline points="4,13 12,21 29,4" fill="none" stroke="#db6a3a" stroke-width="4.2" stroke-linejoin="round"/>
</svg>
<div style="position:absolute;left:138px;top:1109.8px;height:44px;line-height:44px;white-space:pre;font-family:'Liberation Sans', sans-serif;font-size:27.4px;color:#dfe1e5;letter-spacing:0.09px">&quot;http-nio-8080-exec-1&quot;@5,124 在组“main”: 正在运行</div>
<svg style="position:absolute;left:1538px;top:1114px;" width="28" height="34" viewBox="0 0 28 34">
<path d="M3,5 L25,5 L16,17 L16,30 L12,27 L12,17 Z" fill="none" stroke="#ced0d6" stroke-width="2.2" stroke-linejoin="round"/>
</svg>
<svg style="position:absolute;left:1602px;top:1122px;" width="24" height="18" viewBox="0 0 24 18"><polyline points="4,5 12,13 20,5" fill="none" stroke="#ced0d6" stroke-width="2.2" stroke-linecap="round" stroke-linejoin="round"/></svg>
<div style="position:absolute;left:82px;top:1218px;width:1560px;height:384px;background:#3d3223;"></div>
<div style="position:absolute;left:82px;top:1170px;width:1542px;height:48px;background:#43454a;"></div>
<div style="position:absolute;left:1624px;top:1165px;width:16px;height:56px;background:#5a5c61;"></div>
<svg style="position:absolute;left:96px;top:1180px;" width="30" height="28" viewBox="0 0 30 28">
<path d="M5,9 L20,9 Q27,9 27,16 Q27,23 20,23 L13,23" fill="none" stroke="#ced0d6" stroke-width="2.2" stroke-linecap="round"/>
<polyline points="10,3 4,9 10,15" fill="none" stroke="#ced0d6" stroke-width="2.2" stroke-linejoin="round" stroke-linecap="round"/>
</svg>
<div style="position:absolute;left:134px;top:1172.8px;height:44px;line-height:44px;white-space:pre;font-family:'Liberation Sans', sans-serif;font-size:27.7px;letter-spacing:0.054px;color:#dfe1e5">parseStringValue:137, PropertyPlaceholderHelper <i>(org.springframework.util)</i></div>
<div style="position:absolute;left:134px;top:1220.8px;height:44px;line-height:44px;white-space:pre;font-family:'Liberation Sans', sans-serif;font-size:27.7px;letter-spacing:0.052px;color:#7d8188">replacePlaceholders:126, PropertyPlaceholderHelper <i>(org.springframework.util)</i></div>
<div style="position:absolute;left:134px;top:1268.8px;height:44px;line-height:44px;white-space:pre;font-family:'Liberation Sans', sans-serif;font-size:27.7px;letter-spacing:0.146px;color:#7d8188">doResolvePlaceholders:239, AbstractPropertyResolver <i>(org.springframework.core.env)</i></div>
<div style="position:absolute;left:134px;top:1316.8px;height:44px;line-height:44px;white-space:pre;font-family:'Liberation Sans', sans-serif;font-size:27.7px;letter-spacing:0.068px;color:#7d8188">resolveRequiredPlaceholders:210, AbstractPropertyResolver <i>(org.springframework.core.env)</i></div>
<div style="position:absolute;left:134px;top:1364.8px;height:44px;line-height:44px;white-space:pre;font-family:'Liberation Sans', sans-serif;font-size:27.7px;letter-spacing:0.120px;color:#7d8188">resolveRequiredPlaceholders:630, AbstractEnvironment <i>(org.springframework.core.env)</i></div>
<div style="position:absolute;left:134px;top:1412.8px;height:44px;line-height:44px;white-space:pre;font-family:'Liberation Sans', sans-serif;font-size:27.7px;letter-spacing:0.163px;color:#7d8188">resolvePath:125, AbstractRefreshableConfigApplicationContext <i>(org.springframework.context.support)</i></div>
<div style="position:absolute;left:134px;top:1460.8px;height:44px;line-height:44px;white-space:pre;font-family:'Liberation Sans', sans-serif;font-size:27.7px;letter-spacing:0.202px;color:#7d8188">setConfigLocations:81, AbstractRefreshableConfigApplicationContext <i>(org.springframework.context.support)</i></div>
<div style="position:absolute;left:134px;top:1508.8px;height:44px;line-height:44px;white-space:pre;font-family:'Liberation Sans', sans-serif;font-size:27.7px;letter-spacing:0.138px;color:#7d8188">&lt;init&gt;:142, ClassPathXmlApplicationContext <i>(org.springframework.context.support)</i></div>
<div style="position:absolute;left:134px;top:1556.8px;height:44px;line-height:44px;white-space:pre;font-family:'Liberation Sans', sans-serif;font-size:27.7px;letter-spacing:0.177px;color:#7d8188">&lt;init&gt;:85, ClassPathXmlApplicationContext <i>(org.springframework.context.support)</i></div>
<div style="position:absolute;left:99px;top:1602.8px;height:44px;line-height:44px;white-space:pre;font-family:'Liberation Sans', sans-serif;font-size:22.3px;color:#6f737a;letter-spacing:0.26px">使用 Ctrl+Alt+向上箭头 和 Ctrl+Alt+向下箭头 从 IDE 中的任意位置切换帧</div>
<svg style="position:absolute;left:1610px;top:1616px;" width="18" height="18" viewBox="0 0 18 18"><path d="M2,2 L16,16 M16,2 L2,16" stroke="#8c8f94" stroke-width="2"/></svg>
<div style="position:absolute;left:1644px;top:1105px;width:1155px;height:55px;background:#393b40;"></div>
<div style="position:absolute;left:1661px;top:1109px;height:44px;line-height:44px;white-space:pre;font-family:'Liberation Mono', monospace;font-size:28px;color:#6f737a;letter-spacing:-0.8px"><span style="font-family:'Liberation Sans', sans-serif;font-size:26px;letter-spacing:0">对表达式求值</span>(Enter)<span style="font-family:'Liberation Sans', sans-serif;font-size:26px;letter-spacing:0">或添加监视</span>(Ctrl+Shift+Enter)</div>
<svg style="position:absolute;left:2694px;top:1114px;" width="40" height="36" viewBox="0 0 40 36">
<line x1="13" y1="2" x2="13" y2="20" stroke="#6f737a" stroke-width="2"/>
<line x1="2" y1="12" x2="26" y2="12" stroke="#6f737a" stroke-width="2"/>
<circle cx="11" cy="24" r="4.5" fill="none" stroke="#6f737a" stroke-width="2.2"/>
<circle cx="25" cy="24" r="4.5" fill="none" stroke="#6f737a" stroke-width="2.2"/>
<line x1="15" y1="24" x2="21" y2="24" stroke="#6f737a" stroke-width="2"/>
</svg>
<svg style="position:absolute;left:2760px;top:1122px;" width="24" height="18" viewBox="0 0 24 18"><polyline points="4,5 12,13 20,5" fill="none" stroke="#ced0d6" stroke-width="2.2" stroke-linecap="round" stroke-linejoin="round"/></svg>
<div style="position:absolute;left:1668px;top:1458px;width:1110px;height:48px;background:#43454a;border-radius:6px;"></div>
<svg style="position:absolute;left:1711px;top:1179px;" width="30" height="30" viewBox="0 0 30 30"><circle cx="15" cy="15" r="14" fill="#db5c5c"/><rect x="13" y="6.5" width="4" height="11" rx="2" fill="#fff"/><circle cx="15" cy="22" r="2.2" fill="#fff"/></svg>
<div style="position:absolute;left:1749px;top:1172.8px;height:44px;line-height:44px;white-space:pre;font-family:'Liberation Sans', sans-serif;font-size:27.7px"><span style="color:#e8a26c">getResources</span><span style="color:#dfe1e5"> = </span><span style="color:#e55765;font-size:25.8px">找不到局部变量</span><span style="color:#e55765">&#x27;getResources&#x27;</span></div>
<svg style="position:absolute;left:1675px;top:1231px;" width="18" height="22" viewBox="0 0 18 22"><polyline points="5,3 13,11 5,19" fill="none" stroke="#ced0d6" stroke-width="2.2" stroke-linecap="round" stroke-linejoin="round"/></svg>
<svg style="position:absolute;left:1711px;top:1227px;" width="30" height="30" viewBox="0 0 30 30"><rect x="5" y="3" width="19" height="7" rx="1" fill="#3e3625" stroke="#f0c25a" stroke-width="2"/><rect x="5" y="12" width="19" height="6" rx="1" fill="#3e3625" stroke="#f0c25a" stroke-width="2"/><rect x="5" y="20" width="19" height="7" rx="1" fill="#3e3625" stroke="#f0c25a" stroke-width="2"/></svg>
<div style="position:absolute;left:1749px;top:1220.8px;height:44px;line-height:44px;white-space:pre;font-family:'Liberation Sans', sans-serif;font-size:27.7px"><span style="color:#e8a26c">this</span><span style="color:#dfe1e5"> = </span><span style="color:#868a91">{PropertyPlaceholderHelper@6458}</span></div>
<svg style="position:absolute;left:1675px;top:1279px;" width="18" height="22" viewBox="0 0 18 22"><polyline points="5,3 13,11 5,19" fill="none" stroke="#ced0d6" stroke-width="2.2" stroke-linecap="round" stroke-linejoin="round"/></svg>
<svg style="position:absolute;left:1711px;top:1275px;" width="30" height="30" viewBox="0 0 30 30"><circle cx="15" cy="15" r="13" fill="#3e2c22" stroke="#e08855" stroke-width="2.2"/><text x="15.5" y="21.5" text-anchor="middle" font-family="Liberation Sans" font-size="21" font-weight="bold" fill="#e08855">p</text></svg>
<div style="position:absolute;left:1749px;top:1268.8px;height:44px;line-height:44px;white-space:pre;font-family:'Liberation Sans', sans-serif;font-size:27.7px"><span style="color:#e8a26c">value</span><span style="color:#dfe1e5"> = </span><span style="color:#6aab73;letter-spacing:0.35px">&quot;file://${catalina.home}/**/*.tmp&quot;</span></div>
<svg style="position:absolute;left:1675px;top:1327px;" width="18" height="22" viewBox="0 0 18 22"><polyline points="5,3 13,11 5,19" fill="none" stroke="#ced0d6" stroke-width="2.2" stroke-linecap="round" stroke-linejoin="round"/></svg>
<svg style="position:absolute;left:1711px;top:1323px;" width="30" height="30" viewBox="0 0 30 30"><circle cx="15" cy="15" r="13" fill="#3e2c22" stroke="#e08855" stroke-width="2.2"/><text x="15.5" y="21.5" text-anchor="middle" font-family="Liberation Sans" font-size="21" font-weight="bold" fill="#e08855">p</text></svg>
<div style="position:absolute;left:1749px;top:1316.8px;height:44px;line-height:44px;white-space:pre;font-family:'Liberation Sans', sans-serif;font-size:27.7px"><span style="color:#e8a26c">placeholderResolver</span><span style="color:#dfe1e5"> = </span><span style="color:#868a91">{AbstractPropertyResolver$lambda@6467}</span></div>
<svg style="position:absolute;left:1711px;top:1371px;" width="30" height="30" viewBox="0 0 30 30"><circle cx="15" cy="15" r="13" fill="#3e2c22" stroke="#e08855" stroke-width="2.2"/><text x="15.5" y="21.5" text-anchor="middle" font-family="Liberation Sans" font-size="21" font-weight="bold" fill="#e08855">p</text></svg>
<div style="position:absolute;left:1749px;top:1364.8px;height:44px;line-height:44px;white-space:pre;font-family:'Liberation Sans', sans-serif;font-size:27.7px"><span style="color:#e8a26c">visitedPlaceholders</span><span style="color:#dfe1e5"> = </span><span style="color:#dfe1e5">null</span></div>
<svg style="position:absolute;left:1710px;top:1417px;" width="32" height="34" viewBox="0 0 32 34"><text x="15" y="15" text-anchor="middle" font-family="Liberation Sans" font-weight="bold" font-size="16" fill="#dfe1e5">10</text><text x="15" y="31" text-anchor="middle" font-family="Liberation Sans" font-weight="bold" font-size="16" fill="#dfe1e5">01</text></svg>
<div style="position:absolute;left:1749px;top:1412.8px;height:44px;line-height:44px;white-space:pre;font-family:'Liberation Sans', sans-serif;font-size:27.7px"><span style="color:#e8a26c">startIndex</span><span style="color:#dfe1e5"> = </span><span style="color:#dfe1e5">7</span></div>
<svg style="position:absolute;left:1672px;top:1474px;" width="22" height="18" viewBox="0 0 22 18"><polyline points="3,5 11,13 19,5" fill="none" stroke="#ced0d6" stroke-width="2.2" stroke-linecap="round" stroke-linejoin="round"/></svg>
<svg style="position:absolute;left:1709px;top:1472px;" width="34" height="20" viewBox="0 0 34 20"><circle cx="8" cy="11" r="5.5" fill="none" stroke="#9aa7b0" stroke-width="3"/><circle cx="26" cy="11" r="5.5" fill="none" stroke="#9aa7b0" stroke-width="3"/><path d="M2,9 Q8,2 14,9 M20,9 Q26,2 32,9 M13.5,10 L20.5,10" fill="none" stroke="#9aa7b0" stroke-width="3"/></svg>
<div style="position:absolute;left:1749px;top:1460.8px;height:44px;line-height:44px;white-space:pre;font-family:'Liberation Sans', sans-serif;font-size:27.7px"><span style="color:#e8a26c;letter-spacing:0.15px">this.placeholderPrefix</span><span style="color:#dfe1e5"> = </span><span style="color:#6aab73">&quot;${&quot;</span></div>
<svg style="position:absolute;left:1713px;top:1519px;" width="18" height="22" viewBox="0 0 18 22"><polyline points="5,3 13,11 5,19" fill="none" stroke="#ced0d6" stroke-width="2.2" stroke-linecap="round" stroke-linejoin="round"/></svg>
<svg style="position:absolute;left:1750px;top:1515px;" width="28" height="30" viewBox="0 0 28 30"><path d="M4,3 L24,3 L18,11 L24,19 L8,19 L8,28 L4,28 Z" fill="#3592c4"/></svg>
<div style="position:absolute;left:1787px;top:1508.8px;height:44px;line-height:44px;white-space:pre;font-family:'Liberation Sans', sans-serif;font-size:27.7px"><span style="color:#e8a26c">value</span><span style="color:#dfe1e5"> = </span><span style="color:#868a91">{char[2]@6470}</span><span style="color:#dfe1e5"> [$, {]</span></div>
<svg style="position:absolute;left:1749px;top:1563px;" width="30" height="30" viewBox="0 0 30 30"><circle cx="15" cy="15" r="13" fill="#3e2c22" stroke="#e08855" stroke-width="2.2"/><text x="15.5" y="21.5" text-anchor="middle" font-family="Liberation Sans" font-size="21" font-weight="bold" fill="#e08855">f</text></svg>
<div style="position:absolute;left:1787px;top:1556.8px;height:44px;line-height:44px;white-space:pre;font-family:'Liberation Sans', sans-serif;font-size:27.7px"><span style="color:#e8a26c">hash</span><span style="color:#dfe1e5"> = </span><span style="color:#dfe1e5">0</span></div>
<svg style="position:absolute;left:2170px;top:1330px;" width="100" height="110" viewBox="0 0 100 110">
<path d="M83,9 L85,11 L28,80 L23,77 Z" fill="#ff2a2a"/>
<path d="M10,97 L17,66 L25,76 L39,80 Z" fill="#ff2a2a"/>
</svg>
<div style="position:absolute;left:28px;top:1667px;width:12px;height:12px;border:2.4px solid #548af7;border-radius:3px;background:#25324d"></div>
<div style="position:absolute;left:52px;top:1653.8px;height:44px;line-height:44px;white-space:pre;font-family:'Liberation Sans', sans-serif;font-size:27.6px;color:#b4b8bf;letter-spacing:0.5px">spring-core-5.3.20.jar</div>
<svg style="position:absolute;left:343px;top:1666px;" width="14" height="18" viewBox="0 0 14 18"><polyline points="3,2 10,9 3,16" fill="none" stroke="#b4b8bf" stroke-width="2.2" stroke-linecap="round" stroke-linejoin="round"/></svg>
<svg style="position:absolute;left:433px;top:1666px;" width="14" height="18" viewBox="0 0 14 18"><polyline points="3,2 10,9 3,16" fill="none" stroke="#b4b8bf" stroke-width="2.2" stroke-linecap="round" stroke-linejoin="round"/></svg>
<svg style="position:absolute;left:692px;top:1666px;" width="14" height="18" viewBox="0 0 14 18"><polyline points="3,2 10,9 3,16" fill="none" stroke="#b4b8bf" stroke-width="2.2" stroke-linecap="round" stroke-linejoin="round"/></svg>
<svg style="position:absolute;left:774px;top:1666px;" width="14" height="18" viewBox="0 0 14 18"><polyline points="3,2 10,9 3,16" fill="none" stroke="#b4b8bf" stroke-width="2.2" stroke-linecap="round" stroke-linejoin="round"/></svg>
<div style="position:absolute;left:373px;top:1653.8px;height:44px;line-height:44px;white-space:pre;font-family:'Liberation Sans', sans-serif;font-size:27.6px;color:#b4b8bf;">org</div>
<div style="position:absolute;left:464px;top:1653.8px;height:44px;line-height:44px;white-space:pre;font-family:'Liberation Sans', sans-serif;font-size:27.6px;color:#b4b8bf;">springframework</div>
<div style="position:absolute;left:721px;top:1653.8px;height:44px;line-height:44px;white-space:pre;font-family:'Liberation Sans', sans-serif;font-size:27.6px;color:#b4b8bf;">util</div>
<svg style="position:absolute;left:806px;top:1659px;" width="32" height="32" viewBox="0 0 32 32">
<circle cx="16" cy="16" r="13.8" fill="#252f48" stroke="#4f80dc" stroke-width="2.1" />
<path d="M21,11.8 A6.6,6.6 0 1 0 21,20.2" fill="none" stroke="#4f80dc" stroke-width="2.1" stroke-linecap="round"/>
</svg>
<div style="position:absolute;left:846px;top:1653.8px;height:44px;line-height:44px;white-space:pre;font-family:'Liberation Sans', sans-serif;font-size:27.6px;color:#b4b8bf;">PropertyPlaceholderHelper</div>
<div style="position:absolute;left:2386px;top:1653.8px;height:44px;line-height:44px;white-space:pre;font-family:'Liberation Sans', sans-serif;font-size:27.6px;color:#b4b8bf;">63:1</div>
<div style="position:absolute;left:2470px;top:1653.8px;height:44px;line-height:44px;white-space:pre;font-family:'Liberation Sans', sans-serif;font-size:27.6px;color:#b4b8bf;">CRLF</div>
<div style="position:absolute;left:2567px;top:1653.8px;height:44px;line-height:44px;white-space:pre;font-family:'Liberation Sans', sans-serif;font-size:27.6px;color:#b4b8bf;">UTF-8</div>
<svg style="position:absolute;left:2680px;top:1660px;" width="32" height="30" viewBox="0 0 32 30">
<path d="M3,15 Q15,3 27,15 Q15,27 3,15 Z" fill="none" stroke="#b4b8bf" stroke-width="2.2"/>
<circle cx="15" cy="15" r="4" fill="none" stroke="#b4b8bf" stroke-width="2.2"/>
<line x1="4" y1="27" x2="28" y2="3" stroke="#b4b8bf" stroke-width="2.2"/>
</svg>
<div style="position:absolute;left:2744px;top:1653.8px;height:44px;line-height:44px;white-space:pre;font-family:'Liberation Sans', sans-serif;font-size:27px;color:#b4b8bf;">4 个空格</div>
<div style="position:absolute;left:1846px;top:1712px;width:77px;height:10px;border-radius:5px;background:#34333f"></div>
</body></html>
